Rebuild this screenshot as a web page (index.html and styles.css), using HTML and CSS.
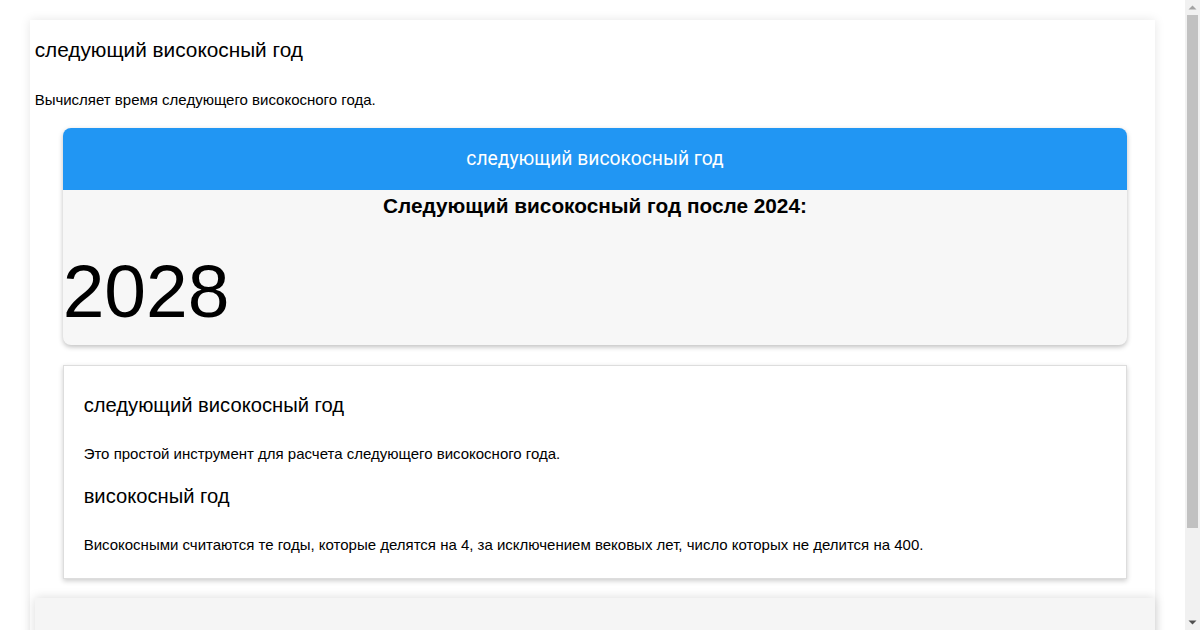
FILE: index.html
```html
<!DOCTYPE html>
<html lang="ru">
<head>
    <meta charset="UTF-8">
    <meta name="viewport" content="width=device-width, initial-scale=1.0">
    <title>следующий високосный год</title>
    <link rel="stylesheet" href="styles.css">
</head>
<body>
    <div class="page">
        <h1 class="page-title">следующий високосный год</h1>
        <p class="page-desc">Вычисляет время следующего високосного года.</p>

        <div class="tool-card">
            <div class="tool-header">следующий високосный год</div>
            <div class="tool-body">
                <h2 class="result-label">Следующий високосный год после 2024:</h2>
                <div class="result-value">2028</div>
            </div>
        </div>

        <div class="info-card">
            <h2 class="info-title">следующий високосный год</h2>
            <p class="info-text">Это простой инструмент для расчета следующего високосного года.</p>
            <h3 class="info-subtitle">високосный год</h3>
            <p class="info-text">Високосными считаются те годы, которые делятся на 4, за исключением вековых лет, число которых не делится на 400.</p>
        </div>

        <div class="footer-box"></div>
    </div>

    <div class="scrollbar">
        <svg class="scroll-arrow" width="15" height="15" viewBox="0 0 15 15"><path d="M3.5 9.5 L7.5 5.5 L11.5 9.5 Z" fill="#a3a3a3"/></svg>
        <div class="scroll-track">
            <div class="scroll-thumb"></div>
        </div>
        <svg class="scroll-arrow" width="15" height="15" viewBox="0 0 15 15"><path d="M3.5 5.5 L11.5 5.5 L7.5 9.5 Z" fill="#505050"/></svg>
    </div>
</body>
</html>
```

FILE: styles.css
```css
body {
    margin: 0 15px 0 0;
    background: #fff;
    font-family: "Liberation Sans", Arial, sans-serif;
    color: #000;
}

.page {
    width: 95%;
    margin: 20px auto;
    padding: 1px 0 0 5px;
    box-sizing: border-box;
    background: #fff;
    box-shadow: 0 0 10px rgba(0, 0, 0, 0.1);
}

.page-title {
    font-size: 20.8px;
    font-weight: normal;
    margin: 17px 0 29px;
}

.page-desc {
    font-size: 15px;
    margin: 0 0 20px;
}

.tool-card {
    width: 95%;
    margin: 0 auto;
    border-radius: 8px;
    overflow: hidden;
    background: #f7f7f7;
    box-shadow: 0 2px 5px rgba(0, 0, 0, 0.25);
}

.tool-header {
    background: #2196f3;
    color: #fff;
    font-family: Roboto, "Liberation Sans", sans-serif;
    font-size: 19.3px;
    line-height: 22px;
    padding: 20px;
    text-align: center;
}

.tool-body {
    padding: 0 0 11px;
}

.result-label {
    font-size: 20.8px;
    text-align: center;
    margin: 4px 0 0;
}

.result-value {
    font-size: 75px;
    margin-top: 30px;
}

.info-card {
    width: 95%;
    margin: 20px auto 0;
    padding: 28px 20px 25px;
    box-sizing: border-box;
    background: #fff;
    border: 1px solid #ddd;
    box-shadow: 0 2px 5px rgba(0, 0, 0, 0.2);
}

.info-title,
.info-subtitle {
    font-size: 20.2px;
    font-weight: normal;
    margin: 0;
}

.info-text {
    font-size: 15px;
    margin: 28px 0 23px;
}

.info-text:last-child {
    margin-bottom: 0;
}

.footer-box {
    height: 119px;
    margin: 19px 0 0;
    background: #f5f5f5;
    box-shadow: 0 0 10px rgba(0, 0, 0, 0.15);
}

/* window scrollbar */
.scrollbar {
    position: fixed;
    top: 0;
    right: 0;
    width: 15px;
    height: 100vh;
    display: flex;
    flex-direction: column;
    background: #f1f1f1;
}

.scroll-arrow {
    display: block;
    flex-shrink: 0;
}

.scroll-track {
    flex: 1;
    padding: 0 2px;
}

.scroll-thumb {
    height: 513px;
    background: #c1c1c1;
}
```
